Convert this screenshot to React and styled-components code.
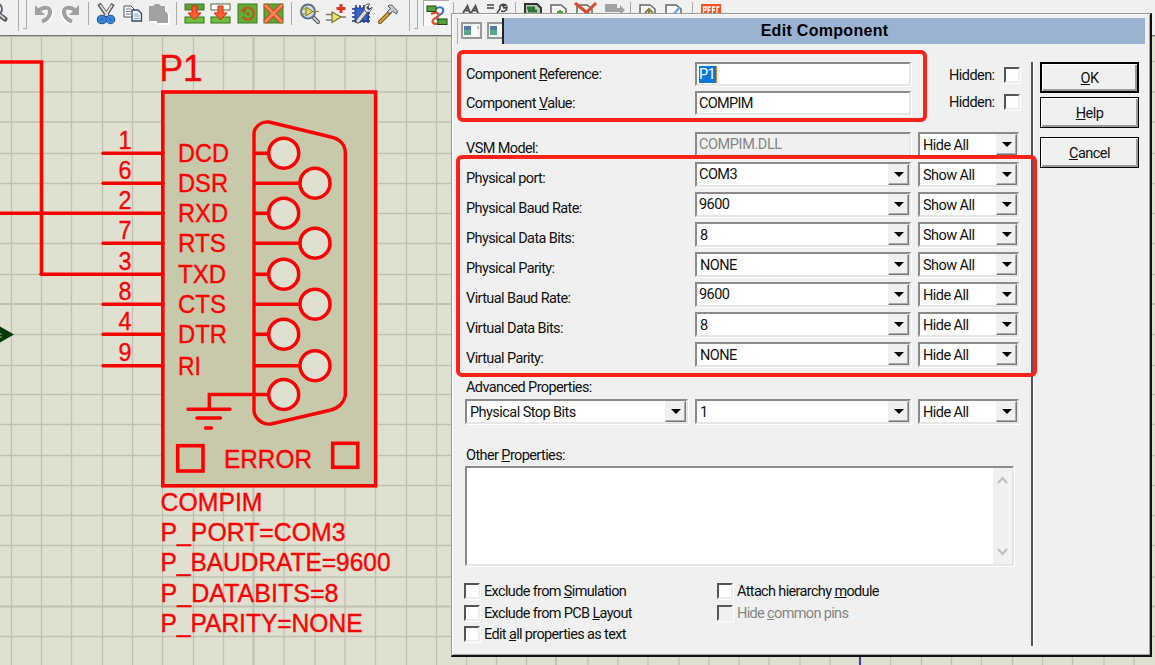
import React from 'react';
import styled, { createGlobalStyle, css } from 'styled-components';

const Global = createGlobalStyle`
  * { box-sizing: border-box; }
  body { margin: 0; overflow: hidden; background: #dfe0d0; }
`;

const Screen = styled.div`
  position: relative;
  width: 1155px;
  height: 665px;
  overflow: hidden;
  display: flex;
  flex-direction: column;
  background: #dfe0d0;
  font-family: Roboto, 'Liberation Sans', sans-serif;
`;

/* ---------- toolbar ---------- */

const Toolbar = styled.div`
  display: flex;
  flex: none;
  height: 36px;
  background: #f0f0f0;
  border-bottom: 1px solid #777;
  box-shadow: 0 1px 0 #b5b5ac;
`;

const Slot = styled.div`
  flex: none;
  width: ${(p) => p.$w}px;
  height: 28px;
  padding-top: 3px;
  svg { display: block; overflow: visible; }
`;

const Separator = styled.div`
  flex: none;
  width: ${(p) => p.$w}px;
  padding: 2px 0 10px;
  &::before {
    content: '';
    display: block;
    width: 1px;
    height: 100%;
    background: #a8a8a8;
  }
`;

const Grip = styled.div`
  flex: none;
  display: flex;
  gap: 4px;
  width: ${(p) => p.$w}px;
  height: 31px;
  &::before { content: ''; width: 1px; height: 31px; background: #b0b0b0; }
  &::after {
    content: '';
    width: 3px;
    height: 28px;
    border-right: 1px solid #aaa;
    border-bottom: 1px solid #aaa;
  }
`;

const Pressed = styled.div`
  flex: none;
  width: 26px;
  height: 26px;
  margin-right: 4px;
  padding: 4px 0 0 3px;
  background: #f9f9f9;
  border-top: 1px solid #aaa;
  border-left: 1px solid #aaa;
  svg { display: block; overflow: visible; }
`;

const Ico = ({ children }) => (
  <svg width="22" height="22" viewBox="0 0 22 22" fill="none">{children}</svg>
);

const LensEdge = () => (
  <Ico>
    <path d="M-2 11 L5 16" stroke="#555" strokeWidth="5" strokeLinecap="round" />
    <path d="M-1 11 L5 16" stroke="#ccc" strokeWidth="2" />
    <circle cx="-4" cy="6" r="6" stroke="#667" strokeWidth="2" />
  </Ico>
);
const Undo = ({ flip }) => (
  <Ico>
    <g transform={flip ? 'translate(20 0) scale(-1 1)' : undefined}>
      <path d="M5 8 C10 3 17 4 16.500 10 C16 14 13 17 9 19" stroke="#fff" strokeWidth="4" transform="translate(1 1)" />
      <path d="M4 8 C10 3 17 4 16 10 C15.500 14 12 17 8 18.500" stroke="#a0a0a0" strokeWidth="4" />
      <path d="M1 2 V12 H11 Z" fill="#a0a0a0" />
    </g>
  </Ico>
);
const Scissors = () => (
  <Ico>
    <path d="M2 1 L12 15 M16 1 L7 15" stroke="#555" strokeWidth="4" />
    <path d="M3 2 L11 13 M15 2 L8 13" stroke="#ddd" strokeWidth="2" />
    <ellipse cx="5" cy="16.500" rx="3" ry="2.500" stroke="#174f9b" strokeWidth="4.500" />
    <ellipse cx="13.500" cy="16.500" rx="2.500" ry="2.500" stroke="#174f9b" strokeWidth="4.500" />
    <ellipse cx="5" cy="16.500" rx="3" ry="2.500" stroke="#3b86dc" strokeWidth="2.800" />
    <ellipse cx="13.500" cy="16.500" rx="2.500" ry="2.500" stroke="#3b86dc" strokeWidth="2.800" />
  </Ico>
);
const Copy = () => (
  <Ico>
    <path d="M1 3 H8 L11 6 V14 H1 Z" fill="#fff" stroke="#555" />
    <path d="M3 6 H8 M3 8.500 H8 M3 11 H8" stroke="#678" />
    <path d="M9 7 H15 L18.500 10.500 V18 H9 Z" fill="#eef5ff" stroke="#334466" strokeWidth="1.300" />
    <path d="M11 11 H15 M11 13 H17 M11 15.500 H17" stroke="#8ab" />
  </Ico>
);
const Paste = () => (
  <Ico>
    <path d="M1 3 H5 L7 1 H11 L13 3 H17 V9 H19 L21 12 V21 H9 V19 H1 Z" fill="#fff" transform="translate(1 1)" />
    <path d="M1 3 H5 L7 1 H11 L13 3 H17 V8 L20 11 V20 H9 V18 H1 Z" fill="#a2a2a2" />
  </Ico>
);
const arrow = 'M8 3 H13 V10 H17 L10.500 17 L4 10 H8 Z';
const GreenSave = ({ open }) => (
  <Ico>
    <rect x="1" y="1" width="19" height="6" fill={open ? '#fff' : '#55a52e'} stroke="#4d6d3a" />
    <rect x="1" y="14" width="19" height="6" fill="#6fc03c" stroke="#3a6e1c" />
    <path d={arrow} fill="#ff5a30" stroke="#ca2d12" />
  </Ico>
);
const GreenTurn = () => (
  <Ico>
    <rect x="1" y="1" width="19" height="19" fill="#63ad35" stroke="#3d7a22" />
    <path d="M6 7 A6 6 0 1 1 5.500 13.500" stroke="#b35c20" strokeWidth="2.400" />
    <path d="M3 7 L10 5 L8 11 Z" fill="#b35c20" />
    <circle cx="11" cy="11" r="1.500" fill="#a05520" />
  </Ico>
);
const GreenCross = () => (
  <Ico>
    <rect x="1" y="1" width="19" height="19" fill="#5da832" stroke="#3d7a22" />
    <path d="M2 2 L19 19 M19 2 L2 19" stroke="#d8401c" strokeWidth="5" />
    <path d="M2 2 L19 19 M19 2 L2 19" stroke="#ff8259" strokeWidth="3" />
  </Ico>
);
const PartLens = () => (
  <Ico>
    <path d="M14 14 L19 19" stroke="#555" strokeWidth="4" strokeLinecap="round" />
    <path d="M14 14 L19 19" stroke="#ccc" strokeWidth="2" strokeLinecap="round" />
    <circle cx="9" cy="8.500" r="7" fill="#cfe0ee" stroke="#5f7180" strokeWidth="2" />
    <path d="M7 4 L14 8.500 L7 13 Z" fill="#e4d75a" stroke="#7c7524" />
    <path d="M14 8.500 H20 M3 6 H7 M3 11 H7" stroke="#8c8530" />
  </Ico>
);
const OpAmp = () => (
  <Ico>
    <path d="M6 9 L15 14 L6 19.500 Z" fill="#ede36a" stroke="#77702a" strokeWidth="1.200" />
    <path d="M0 11.500 H6 M0 17 H6 M15 14 H20" stroke="#777" strokeWidth="1.500" />
    <path d="M15 1 V10 M10.500 5.500 H19.500" stroke="#e2331c" strokeWidth="3" />
  </Ico>
);
const ChipTool = () => (
  <Ico>
    <path d="M4 2 V20 M8 2 V20 M12 2 V20 M16 2 V20 M0 6 H18 M0 10 H18 M0 14 H18 M0 18 H18" stroke="#173a8c" strokeWidth="1.500" />
    <rect x="3" y="5" width="13" height="13" fill="#3561cf" stroke="#163a88" />
    <path d="M6 18 L14 8" stroke="#555" strokeWidth="5" strokeLinecap="round" />
    <path d="M6 18 L14 8" stroke="#ddd" strokeWidth="3" strokeLinecap="round" />
    <path d="M18 1 C14 0 11 4 13 8 C16 11 20 8 20 4 L17 7 L14.500 5 Z" fill="#eee" stroke="#555" />
  </Ico>
);
const Hammer = () => (
  <Ico>
    <path d="M2 19 L12 9" stroke="#7b5715" strokeWidth="4" strokeLinecap="round" />
    <path d="M2 19 L11 10" stroke="#d8a338" strokeWidth="2" strokeLinecap="round" />
    <path d="M10 3 C13 1 15 2 16 4.500 L19.500 8 L18.500 11 L16.500 9.500 L14.500 8.500 L11 11 L9.500 8.500 L12.500 5.500 Z" fill="#c2cacc" stroke="#555" />
  </Ico>
);
const WireRoute = () => (
  <Ico>
    <path d="M9 4 C15 -1 19 6 14 9 C10 11 9 14 12 16" stroke="#3478c6" strokeWidth="2.200" />
    <path d="M4 9 C10 6 14 9 10 12 C4 15 4 20 11 18.500" stroke="#df5227" strokeWidth="2.400" />
    <rect x="0" y="1" width="9" height="5.500" fill="#53a736" stroke="#1c4512" />
    <rect x="11" y="14" width="9" height="5.500" fill="#53a736" stroke="#1c4512" />
  </Ico>
);
const FindText = () => (
  <Ico>
    <path d="M0 10 L4.500 3 L7 10 M2 7.500 H7 M8 10 L12.500 3 L15 10 M10 7.500 H15" stroke="#555" strokeWidth="2" />
  </Ico>
);
const AssignTool = () => (
  <Ico>
    <path d="M0 2 H7 M0 5 H7" stroke="#444" strokeWidth="1.500" />
    <path d="M10 10 L13 6 C12 2 16 0 19 2 L16 3 L17 5 L20 4 C20 8 17 9 14 8" stroke="#444" strokeWidth="1.500" />
  </Ico>
);
const SheetIcon = ({ kind }) => (
  <Ico>
    {kind === 'root' && <path d="M1 1 H13 L17 5 V16 H1 Z" fill="#b7c6b2" stroke="#333" strokeWidth="2" />}
    {kind !== 'root' && <path d="M1 2 H11 L16 6 V16 H1 Z" fill="#f8f8f8" stroke="#666" strokeWidth="1.500" />}
    {kind === 'root' && <path d="M3 5 H11 M4 8 H13" stroke="#287a31" strokeWidth="3" />}
    {kind === 'new' && <path d="M10 7 V14 M7 9 H13" stroke="#49a82d" strokeWidth="2" />}
    {kind === 'del' && <path d="M-1 0 L15 13 M20 0 L7 13" stroke="#d84c2c" strokeWidth="3" />}
    {kind === 'up' && <path d="M10 14 V6 M6 10 L10 6 L14 10" stroke="#85803c" strokeWidth="2" />}
    {kind === 'pick' && <path d="M6 14 L15 4" stroke="#55a7dc" strokeWidth="2" />}
  </Ico>
);
const ExitSheet = () => (
  <Ico>
    <path d="M0 1 H12 V5 H15 V2 L20 7 L15 12 V9 H0 Z" fill="#a2a2a2" />
  </Ico>
);
const ErcIcon = () => (
  <Ico>
    <rect x="0" y="1" width="20" height="16" fill="#f4511e" />
    <path d="M2.500 11 V4 H5 V7 H2.500 M10 4 H7 V11 M7 7 H9.500 M14.500 4 H11.500 V11 M11.500 7 H14 M18.500 4 H16 V11" stroke="#fff" strokeWidth="1.300" />
  </Ico>
);

/* ---------- schematic ---------- */

const Canvas = styled.svg`
  display: block;
  flex: none;
  width: 1155px;
  height: 629px;
  text {
    font-family: 'Liberation Sans', sans-serif;
    fill: #f00;
    stroke: #f00;
    stroke-width: 0.35px;
  }
`;

const GRID_X = [11.5, 41.5, 71.5, 102.5, 132.5, 162.5, 193.5, 223.5, 253.5, 284, 315, 345, 375.5, 406.5, 436.5, 466.5, 496.5, 526.5, 556, 588, 618, 648, 679, 709, 739, 769, 800, 830, 860, 890.5, 921.5, 951.5, 981.5, 1012.5, 1042.5, 1072.5, 1104, 1134];
const GRID_Y = [61.5, 92, 122, 153.5, 183.5, 213.5, 243.5, 274.5, 304, 334.5, 365.5, 394.5, 424.5, 455.5, 485.5, 515.5, 545.5, 577, 606.5, 636.5];
const PINS = [
  { n: '1', name: 'DCD', y: 153, w: 51 },
  { n: '6', name: 'DSR', y: 183, w: 50 },
  { n: '2', name: 'RXD', y: 213, w: 50, x1: 0 },
  { n: '7', name: 'RTS', y: 243, w: 48 },
  { n: '3', name: 'TXD', y: 274, w: 48, x1: 41 },
  { n: '8', name: 'CTS', y: 304, w: 48 },
  { n: '4', name: 'DTR', y: 334, w: 49 },
  { n: '9', name: 'RI', y: 365.5, w: 23 },
];
const CAPTIONS = [
  ['COMPIM', 511, 102],
  ['P_PORT=COM3', 541, 185],
  ['P_BAUDRATE=9600', 571, 230],
  ['P_DATABITS=8', 602, 178],
  ['P_PARITY=NONE', 632, 202],
];

const Schematic = () => (
  <Canvas viewBox="0 36 1155 629">
    <g stroke="#c1c1b1">
      {GRID_X.map((x, i) => <line key={x} x1={x} x2={x} y1="36" y2="665" strokeWidth={i % 10 === 8 ? 2.2 : 1.3} />)}
      {GRID_Y.map((y, i) => <line key={y} y1={y} y2={y} x1="0" x2="1155" strokeWidth={i % 10 === 8 ? 2.2 : 1.3} />)}
    </g>
    <line x1="860" x2="860" y1="650" y2="665" stroke="#2a2ad8" strokeWidth="1.800" />
    <path d="M0 326.500 L14 334.500 L0 342.500 Z" fill="#003c00" />
    <path d="M0 334 H2 M0 337 H2" stroke="#9ab09a" strokeWidth="1" />
    <g stroke="#f00" strokeWidth="3.600" fill="none">
      <rect x="162.800" y="92" width="212.800" height="393.800" fill="#c8c8ab" />
      <path d="M0 62 H41.500 V274.300" />
      {PINS.map((p, i) => (
        <g key={p.n}>
          <line x1={p.x1 ?? 103} x2="163" y1={p.y + 0.3} y2={p.y + 0.3} strokeLinecap="round" strokeWidth="3.400" />
          <line x1="254" x2={i % 2 ? 300 : 270} y1={p.y + 0.3} y2={p.y + 0.3} />
        </g>
      ))}
      <path d="M254 133 C255 126 262 121 269 122 L331 137 C340 139 345 145 345.300 152 V396 C344 402 339 408 331 410 L271 424 C262 425 254 418 254 410 Z" strokeWidth="3.400" />
      <path d="M209.300 409 V394.500 H270 M188 409.300 H230 M197 418 H220.500 M205.500 428 H211.500" strokeLinecap="round" strokeWidth="3.400" />
      {PINS.map((p, i) => (
        <circle key={p.n} cx={i % 2 ? 315 : 283.7} cy={p.y + 0.2} r="15" fill="#dfe0d0" strokeWidth="3.500" />
      ))}
      <circle cx="283.700" cy="394.500" r="15" fill="#dfe0d0" strokeWidth="3.500" />
      <rect x="177.700" y="445.700" width="25.300" height="25.300" />
      <rect x="332.700" y="443.300" width="25" height="24" />
    </g>
    {PINS.map((p) => (
      <g key={p.n} fontSize="25">
        <text x="118.500" y={p.y - 4.5} textLength="13" lengthAdjust="spacingAndGlyphs">{p.n}</text>
        <text x="178" y={p.y + 9} textLength={p.w} lengthAdjust="spacingAndGlyphs">{p.name}</text>
      </g>
    ))}
    <text x="159.500" y="81" fontSize="37" textLength="43" lengthAdjust="spacingAndGlyphs">P1</text>
    <g fontSize="25">
      <text x="224" y="468" textLength="88" lengthAdjust="spacingAndGlyphs">ERROR</text>
      {CAPTIONS.map(([t, y, w]) => (
        <text key={t} x="160.500" y={y} textLength={w} lengthAdjust="spacingAndGlyphs">{t}</text>
      ))}
    </g>
  </Canvas>
);

/* ---------- dialog ---------- */

const Dialog = styled.section`
  position: absolute;
  left: 451px;
  top: 13px;
  width: 701px;
  height: 644px;
  display: flex;
  flex-direction: column;
  padding: 4px 5px 0 5px;
  background: #f0f0f0;
  border: 1px solid #999;
  border-right: 2px solid #111;
  border-bottom: 2px solid #111;
  box-shadow: inset 1px 1px 0 #fff, inset -1px -1px 0 #a5a5a5;
  font-size: 14.500px;
  letter-spacing: -0.55px;
  color: #111;
`;

const TitleBar = styled.header`
  display: flex;
  flex: none;
  height: 26px;
  background: #9ab3d1;
`;

const TitleThumbs = styled.div`
  display: flex;
  gap: 5px;
  width: 47px;
  padding: 4px 0 0 3px;
  overflow: hidden;
  background: #f0f0f0;
  border-left: 1px solid #aaa;
  border-right: 2px solid #222;
  svg { flex: none; }
`;

const Title = styled.h1`
  flex: 1;
  margin: 0;
  font: bold 16px/26px 'Liberation Sans', sans-serif;
  letter-spacing: 0.3px;
  text-align: center;
  color: #000;
`;

const WindowThumb = () => (
  <svg width="21" height="17" viewBox="0 0 21 17">
    <rect x="1" y="1" width="19" height="15" fill="#f4f4f4" stroke="#999" strokeWidth="2" />
    <rect x="3" y="4" width="7" height="9" fill="#5aa88c" />
    <rect x="3" y="4" width="7" height="4" fill="#4d7da8" />
    <rect x="10" y="4" width="6" height="9" fill="#fff" />
    <path d="M17 4 V7" stroke="#79a" />
  </svg>
);

const Body = styled.div`
  display: flex;
  flex: 1;
  padding: 18px 0 0 8px;
`;

const Form = styled.div`
  display: flex;
  flex-direction: column;
  width: 566px;
`;

const Row = styled.div`
  display: flex;
  flex: none;
  gap: 7px;
  height: ${(p) => p.$h}px;
`;

const Label = styled.label`
  width: 223px;
  padding-left: 1px;
  padding-top: ${(p) => p.$drop || 0}px;
  line-height: 25px;
  letter-spacing: -0.6px;
  white-space: nowrap;
`;

const sunken = css`
  border: 2px solid;
  border-color: #8a8a8a #e6e6e6 #e6e6e6 #8a8a8a;
  box-shadow: 1px 1px 0 #fff;
`;

const Field = styled.div`
  ${sunken}
  width: 216px;
  height: 24px;
  padding-left: 2px;
  line-height: 21px;
  letter-spacing: ${(p) => (p.$off ? -0.4 : -0.7)}px;
  background: ${(p) => (p.$off ? '#f0f0f0' : '#fff')};
  color: ${(p) => (p.$off ? '#858585' : '#111')};
`;

const Selected = styled.span`
  display: inline-block;
  height: 17px;
  line-height: 17px;
  padding-right: 1px;
  background: #0878d7;
  color: #fff;
  border-right: 1px solid #f08020;
`;

const ComboBox = styled.div`
  ${sunken}
  display: flex;
  justify-content: space-between;
  width: ${(p) => p.$w}px;
  height: 25px;
  padding-left: ${(p) => (p.$raised ? 2 : 3)}px;
  line-height: ${(p) => (p.$raised ? 21 : 23)}px;
  background: #fff;
`;

const DropButton = styled.span`
  display: flex;
  align-items: center;
  justify-content: center;
  width: 21px;
  height: 21px;
  background: #f0f0f0;
  border: 1px solid;
  border-color: #eee #777 #777 #eee;
  box-shadow: inset -1px -1px 0 #aaa;
  &::before {
    content: '';
    border: 5px solid transparent;
    border-top-color: #000;
    border-bottom: 0;
  }
`;

const Combo = ({ children, w = 216, raised }) => (
  <ComboBox $w={w} $raised={raised}>{children}<DropButton /></ComboBox>
);

const HiddenCheck = styled.label`
  display: flex;
  justify-content: space-between;
  width: 102px;
  padding: ${(p) => p.$top}px 0 0 31px;
  line-height: 17px;
`;

const Box = styled.span`
  flex: none;
  width: 16px;
  height: 16px;
  background: ${(p) => (p.$off ? '#f0f0f0' : '#fff')};
  border: 2px solid;
  border-color: #555 #eee #eee #555;
  box-shadow: 1px 1px 0 #fff;
`;

const Memo = styled.div`
  ${sunken}
  display: flex;
  justify-content: flex-end;
  flex: none;
  width: 549px;
  height: 100px;
  background: #fff;
`;

const ScrollTrack = styled.div`
  display: flex;
  flex-direction: column;
  justify-content: space-between;
  align-items: center;
  width: 19px;
  padding: 8px 0;
  background: #f0f0f0;
`;

const Chevron = ({ down }) => (
  <svg width="11" height="8" viewBox="0 0 11 8">
    <path d={down ? 'M1 1 L5.500 6 L10 1' : 'M1 7 L5.500 2 L10 7'} fill="none" stroke="#bdbdbd" strokeWidth="2" />
  </svg>
);

const Checks = styled.div`
  display: grid;
  grid-template-columns: 253px auto;
  grid-auto-rows: 21.500px;
  margin: 17px 0 0 -1px;
`;

const Check = styled.label`
  display: flex;
  gap: 4px;
  line-height: 17px;
  letter-spacing: -0.65px;
  color: ${(p) => (p.$off ? '#858585' : '#111')};
`;

const Divider = styled.div`
  width: 3px;
  height: 584px;
  background: #555;
  border-right: 1px solid #fff;
`;

const Buttons = styled.div`
  display: flex;
  flex-direction: column;
  margin-left: 6px;
`;

const Push = styled.button`
  width: 99px;
  height: 31px;
  margin: 0 0 ${(p) => p.$gap}px;
  padding: 2px 0 0;
  background: #f0f0f0;
  border: ${(p) => (p.$primary ? 2 : 1)}px solid #000;
  border-radius: 0;
  box-shadow: inset 1px 1px 0 #fff, inset -2px -2px 0 #999;
  font: inherit;
  letter-spacing: inherit;
  color: #111;
`;

const Highlight = styled.div`
  position: absolute;
  left: ${(p) => p.$x}px;
  top: ${(p) => p.$y}px;
  width: ${(p) => p.$w}px;
  height: ${(p) => p.$h}px;
  border: 4px solid #ff2216;
  border-radius: 6px;
  pointer-events: none;
`;

const PROPS = [
  { label: 'Physical port:', value: 'COM3', show: 'Show All', raised: true },
  { label: 'Physical Baud Rate:', value: '9600', show: 'Show All', raised: true },
  { label: 'Physical Data Bits:', value: '8', show: 'Show All' },
  { label: 'Physical Parity:', value: 'NONE', show: 'Show All' },
  { label: 'Virtual Baud Rate:', value: '9600', show: 'Hide All', raised: true },
  { label: 'Virtual Data Bits:', value: '8', show: 'Hide All' },
  { label: 'Virtual Parity:', value: 'NONE', show: 'Hide All' },
];

export default function App() {
  return (
    <Screen>
      <Global />
      <Toolbar>
        <Slot $w={18}><LensEdge /></Slot>
        <Grip $w={16} />
        <Slot $w={26}><Undo /></Slot>
        <Slot $w={28}><Undo flip /></Slot>
        <Separator $w={9} />
        <Slot $w={26}><Scissors /></Slot>
        <Slot $w={25}><Copy /></Slot>
        <Slot $w={28}><Paste /></Slot>
        <Separator $w={8} />
        <Slot $w={26}><GreenSave /></Slot>
        <Slot $w={27}><GreenSave open /></Slot>
        <Slot $w={26}><GreenTurn /></Slot>
        <Slot $w={28}><GreenCross /></Slot>
        <Separator $w={8} />
        <Slot $w={27}><PartLens /></Slot>
        <Slot $w={26}><OpAmp /></Slot>
        <Slot $w={26}><ChipTool /></Slot>
        <Slot $w={31}><Hammer /></Slot>
        <Grip $w={14} />
        <Pressed><WireRoute /></Pressed>
        <Separator $w={10} />
        <Slot $w={24}><FindText /></Slot>
        <Slot $w={28}><AssignTool /></Slot>
        <Separator $w={9} />
        <Slot $w={26}><SheetIcon kind="root" /></Slot>
        <Slot $w={26}><SheetIcon kind="new" /></Slot>
        <Slot $w={29}><SheetIcon kind="del" /></Slot>
        <Slot $w={25}><ExitSheet /></Slot>
        <Separator $w={9} />
        <Slot $w={26}><SheetIcon kind="up" /></Slot>
        <Slot $w={27}><SheetIcon kind="pick" /></Slot>
        <Separator $w={9} />
        <Slot $w={26}><ErcIcon /></Slot>
      </Toolbar>
      <Schematic />

      <Dialog>
        <TitleBar>
          <TitleThumbs><WindowThumb /><WindowThumb /></TitleThumbs>
          <Title>Edit Component</Title>
        </TitleBar>
        <Body>
          <Form>
            <Row $h={29}>
              <Label>Component <u>R</u>eference:</Label>
              <Field><Selected>P1</Selected></Field>
              <HiddenCheck $top={5}>Hidden:<Box /></HiddenCheck>
            </Row>
            <Row $h={41}>
              <Label>Component <u>V</u>alue:</Label>
              <Field>COMPIM</Field>
              <HiddenCheck $top={3}>Hidden:<Box /></HiddenCheck>
            </Row>
            <Row $h={30}>
              <Label $drop={4}>VSM Model:</Label>
              <Field $off>COMPIM.DLL</Field>
              <Combo w={101}>Hide All</Combo>
            </Row>
            {PROPS.map((p) => (
              <Row $h={30} key={p.label}>
                <Label $drop={4}>{p.label}</Label>
                <Combo raised={p.raised}>{p.value}</Combo>
                <Combo w={101}>{p.show}</Combo>
              </Row>
            ))}
            <Row $h={27}><Label $drop={3}>Advanced Properties:</Label></Row>
            <Row $h={44}>
              <Combo w={223}>Physical Stop Bits</Combo>
              <Combo>1</Combo>
              <Combo w={101}>Hide All</Combo>
            </Row>
            <Row $h={23}><Label>Other <u>P</u>roperties:</Label></Row>
            <Memo>
              <ScrollTrack><Chevron /><Chevron down /></ScrollTrack>
            </Memo>
            <Checks>
              <Check><Box /><span>Exclude from <u>S</u>imulation</span></Check>
              <Check><Box /><span>Attach hierarchy <u>m</u>odule</span></Check>
              <Check><Box /><span>Exclude from PCB <u>L</u>ayout</span></Check>
              <Check $off><Box $off /><span>Hide <u>c</u>ommon pins</span></Check>
              <Check><Box /><span>Edit <u>a</u>ll properties as text</span></Check>
            </Checks>
          </Form>
          <Divider />
          <Buttons>
            <Push $primary $gap={4}><u>O</u>K</Push>
            <Push $gap={9}><u>H</u>elp</Push>
            <Push $gap={0}><u>C</u>ancel</Push>
          </Buttons>
        </Body>
        <Highlight $x={5} $y={36} $w={470} $h={72} />
        <Highlight $x={4} $y={141} $w={581} $h={222} />
      </Dialog>
    </Screen>
  );
}
